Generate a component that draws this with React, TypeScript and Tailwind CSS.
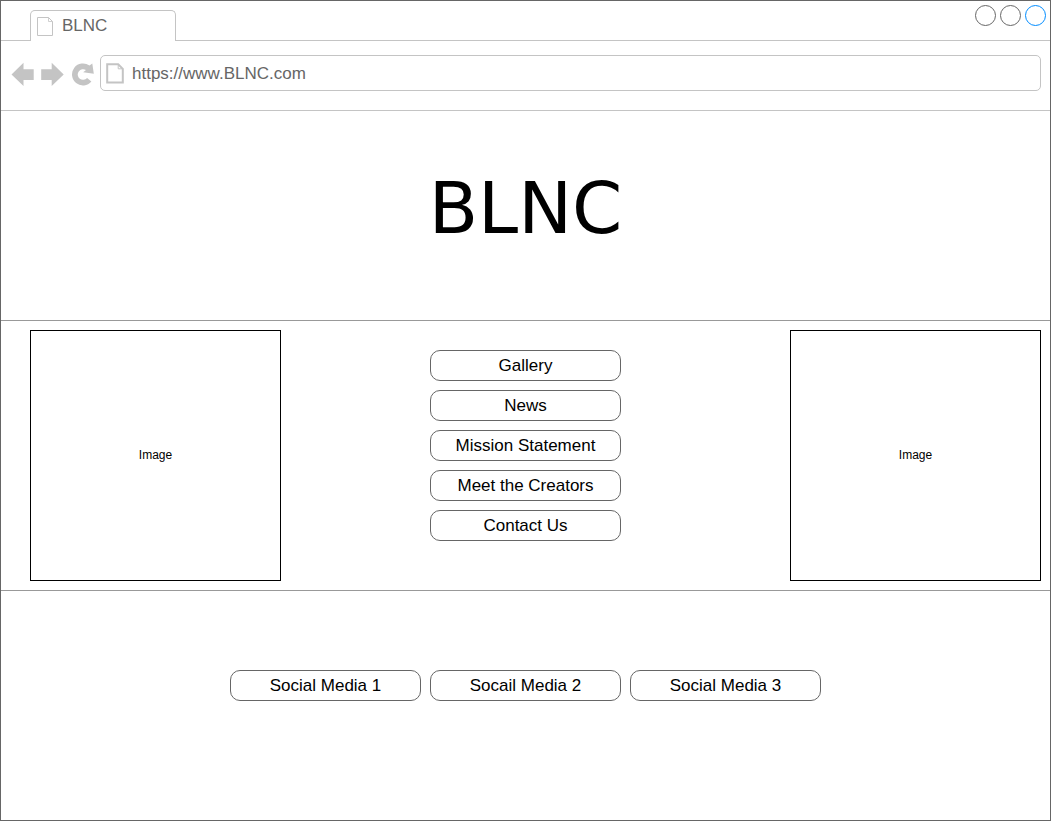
import React, { useState } from "react";

const pages = ["Gallery", "News", "Mission Statement", "Meet the Creators", "Contact Us"];
const socials = ["Social Media 1", "Socail Media 2", "Social Media 3"];

function PillButton({ label }: { label: string }) {
  return (
    <button
      type="button"
      className="flex h-[31px] w-[191px] items-center justify-center rounded-[10px] border border-[#666666] bg-white text-[17px] leading-5 text-black"
    >
      {label}
    </button>
  );
}

function ImagePlaceholder({ className }: { className: string }) {
  return (
    <div
      className={
        "flex size-[251px] items-center justify-center border border-black pb-0.5 text-xs text-black " + className
      }
    >
      Image
    </div>
  );
}

function TabPageIcon() {
  return (
    <svg width="16" height="19" viewBox="0 0 16 19" fill="none" stroke="#c4c4c4" aria-hidden="true">
      <path d="M0.5 0.5H11.5L15.5 4.5V18.5H0.5Z" />
      <path d="M11.5 0.5V4.5H15.5" strokeWidth="0.8" />
    </svg>
  );
}

function AddressPageIcon() {
  return (
    <svg width="18" height="21" viewBox="0 0 18 21" fill="none" stroke="#c4c4c4" aria-hidden="true">
      <path d="M1.2 1.2H12.2L16.8 5.8V19.5H1.2Z" strokeWidth="2" />
      <path d="M12.2 1.2V5.8H16.8" strokeWidth="1" />
    </svg>
  );
}

export default function App() {
  const [address, setAddress] = useState("https://www.BLNC.com");

  return (
    <div className="flex min-h-screen flex-col border border-[#666666] bg-white font-['Liberation_Sans',Arial,sans-serif]">
      <header>
        <div className="flex h-10 items-end justify-between border-b border-[#c4c4c4] pl-[29px] pr-1">
          <button
            type="button"
            className="-mb-px flex h-[31px] w-[146px] items-center gap-[9px] rounded-t-[5px] border border-b-0 border-[#c4c4c4] bg-white px-1.5 text-[17px] leading-5 text-[#666666]"
          >
            <TabPageIcon />
            BLNC
          </button>
          <div className="flex gap-1 self-start pt-1">
            <button type="button" aria-label="Minimize" className="size-[21px] rounded-full border border-[#666666]" />
            <button type="button" aria-label="Maximize" className="size-[21px] rounded-full border border-[#666666]" />
            <button type="button" aria-label="Close" className="size-[21px] rounded-full border border-[#008cff]" />
          </div>
        </div>

        <div className="flex items-center border-b border-[#c4c4c4] pb-[19px] pl-2.5 pr-[9px] pt-3.5">
          <div className="flex gap-1.5 pt-0.5 text-[#c4c4c4]">
            <button type="button" aria-label="Back">
              <svg width="24" height="24" viewBox="0 0 24 24" fill="currentColor" aria-hidden="true">
                <path d="M0.5 12.5L12.5 0.7V7.3H22.7V18H12.5V24Z" />
              </svg>
            </button>
            <button type="button" aria-label="Forward">
              <svg width="24" height="24" viewBox="0 0 24 24" fill="currentColor" aria-hidden="true">
                <path d="M22.7 12.5L10.7 0.7V7.3H0.2V18H10.7V24Z" />
              </svg>
            </button>
            <button type="button" aria-label="Reload">
              <svg width="24" height="24" viewBox="0 0 24 24" fill="currentColor" aria-hidden="true">
                <path d="M20.4 19.6A11 11 0 1 1 18.5 3.6L21.3 1.5L22.8 11.8L12.2 10.2L15 8.1A5.3 5.3 0 1 0 16.1 15.9Z" />
              </svg>
            </button>
          </div>
          <label className="ml-[5px] flex h-9 min-w-0 flex-1 items-center gap-2 rounded-[5px] border border-[#c4c4c4] pl-[5px]">
            <AddressPageIcon />
            <input
              type="text"
              aria-label="Address"
              value={address}
              onChange={(event) => setAddress(event.target.value)}
              className="min-w-0 flex-1 bg-transparent pt-0.5 text-[17px] leading-5 text-[#666666] outline-none"
            />
          </label>
        </div>
      </header>

      <main>
        <section className="flex justify-center border-b border-[#999999] pb-[70px] pt-[55px]">
          <h1 className="font-['DejaVu_Sans',Verdana,sans-serif] text-[72px] leading-[84px] text-black">BLNC</h1>
        </section>

        <section className="grid grid-cols-[1fr_auto_1fr] border-b border-[#999999] py-[9px]">
          <ImagePlaceholder className="ml-[29px]" />
          <nav className="flex flex-col gap-[9px] pt-5">
            {pages.map((page) => (
              <PillButton key={page} label={page} />
            ))}
          </nav>
          <ImagePlaceholder className="mr-[9px] justify-self-end" />
        </section>
      </main>

      <footer className="flex flex-wrap justify-center gap-[9px] pt-[79px]">
        {socials.map((social) => (
          <PillButton key={social} label={social} />
        ))}
      </footer>
    </div>
  );
}
